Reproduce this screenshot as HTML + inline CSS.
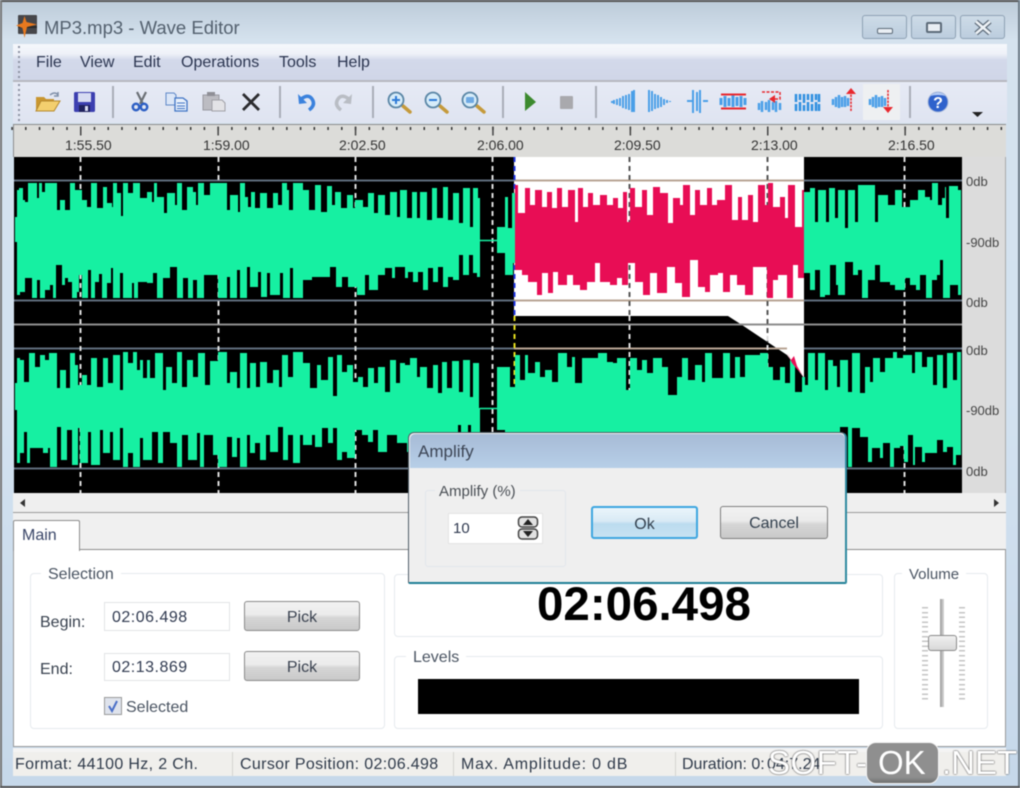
<!DOCTYPE html>
<html><head><meta charset="utf-8"><title>MP3.mp3 - Wave Editor</title>
<style>
html,body{margin:0;padding:0;width:1020px;height:788px;overflow:hidden;background:#c9d9e8}
#w{position:absolute;left:0;top:0;width:1020px;height:788px;overflow:hidden;filter:blur(.55px);font-family:"Liberation Sans",sans-serif;color:#2f3a4a;background:linear-gradient(#bccbd9,#d5e2ee 40px,#d3e2f0 400px,#c6d8ea)}
#w div,#w span.t{position:absolute;white-space:nowrap;box-sizing:border-box}
.t{font-size:16px;line-height:20px}
.btn{border:1.5px solid #8a8a8a;border-radius:3px;background:linear-gradient(#f2f2f2,#ebebeb 45%,#d6d6d6 55%,#c9c9c9);text-align:center;font-size:16px;color:#3a4250}
.grp{border:1.5px solid #e6eaee;border-radius:4px}
.lg{background:#fff;padding:0 7px;font-size:16px;line-height:18px;color:#4a5462}
.inp{background:#fff;border:1.5px solid #e2e4e6;font-size:16px;color:#303a50;letter-spacing:.5px}
.sep{width:2px;top:86px;height:32px;background:#a9adb8}
.wb{top:15px;height:24px;width:45px;border:1.5px solid #8ea1b4;border-radius:3px;background:linear-gradient(#cddbe7,#bccdde)}
.wm{font-size:33px;line-height:38px;color:#fff;text-shadow:0 0 1.5px #5a5a5a,0 0 1.5px #5a5a5a}
</style></head><body><div id="w">
<div style="left:0;top:0;width:1020px;height:2px;background:#555"></div>
<div style="left:0;top:0;width:1.5px;height:788px;background:#777"></div>
<div style="left:1018px;top:0;width:2px;height:788px;background:#6d7a86"></div>
<div style="left:0;top:786px;width:1020px;height:2px;background:#555"></div>

<!-- app icon -->
<svg style="position:absolute;left:15px;top:13px" width="24" height="26" viewBox="0 0 24 26"><rect x="3" y="2" width="19" height="19" rx="1" fill="#46464a"/><rect x="3" y="13" width="19" height="2" fill="#2a2a2a"/><path d="M9.500 3 L11.500 9 L22 11.500 L12 14 L9.500 25 L7.500 15 L1 12.500 L7.500 10Z" fill="#e8791f"/></svg>
<span class="t" style="left:44px;top:18px;font-size:18.500px;color:#53606e">MP3.mp3 - Wave Editor</span>

<!-- window buttons -->
<div class="wb" style="left:862px"></div><div class="wb" style="left:911px"></div><div class="wb" style="left:960px"></div>
<div style="left:877px;top:28px;width:16px;height:6px;background:#e9eef3;border:1.5px solid #5c6a78;border-radius:2px"></div>
<div style="left:926px;top:22px;width:16px;height:11px;background:#e9eef3;border:2.500px solid #5c6a78;border-radius:2px"></div>
<svg style="position:absolute;left:974px;top:20px" width="18" height="15"><path d="M2 1.500 L16 13.500 M16 1.500 L2 13.500" stroke="#5c6a78" stroke-width="5"/><path d="M2 1.500 L16 13.500 M16 1.500 L2 13.500" stroke="#eef2f6" stroke-width="2.500"/></svg>

<!-- menu -->
<div style="left:13px;top:44px;width:994px;height:36px;background:linear-gradient(#f6f8fc,#eef1f8 10px,#d3d9ea 16px,#d0d6e8)"></div>
<div style="left:13px;top:80px;width:994px;height:2px;background:#b6b8bf"></div>
<div style="left:13px;top:82px;width:994px;height:41px;background:linear-gradient(#e6eaf5,#dfe4f1)"></div>
<div style="left:18px;top:46px;width:2px;height:34px;background:repeating-linear-gradient(#8d93a3 0 2px,transparent 2px 5px)"></div>
<div style="left:18px;top:84px;width:2px;height:38px;background:repeating-linear-gradient(#8d93a3 0 2px,transparent 2px 5px)"></div>
<span class="t" style="left:36px;top:53px;color:#2b3550">File</span>
<span class="t" style="left:80px;top:53px;color:#2b3550">View</span>
<span class="t" style="left:133px;top:53px;color:#2b3550">Edit</span>
<span class="t" style="left:181px;top:53px;color:#2b3550">Operations</span>
<span class="t" style="left:279px;top:53px;color:#2b3550">Tools</span>
<span class="t" style="left:337px;top:53px;color:#2b3550">Help</span>

<!-- toolbar -->
<div class="sep" style="left:112px"></div><div class="sep" style="left:279px"></div><div class="sep" style="left:372px"></div><div class="sep" style="left:502px"></div><div class="sep" style="left:595px"></div><div class="sep" style="left:909px"></div>
<div style="left:863px;top:84px;width:37px;height:36px;background:#eef0f2"></div>
<svg style="position:absolute;left:0;top:82px" width="1020" height="42" viewBox="0 82 1020 42">
<path d="M36 111 V97 H44 L46 99 H54 V111Z" fill="#c9962f"/><path d="M36 111 L41 101 H60 L54 111Z" fill="#f3cf6e" stroke="#b5892e"/><path d="M50 95 Q55 91 58 95 M58 92 V96 H54" fill="none" stroke="#7f8fa8" stroke-width="1.500"/>
<rect x="74" y="92" width="21" height="20" rx="1.500" fill="#3c3fb0"/><rect x="78" y="93" width="13" height="9" fill="#d8dcf2"/><rect x="79" y="105" width="11" height="7" fill="#20225e"/><rect x="85" y="106" width="3" height="5" fill="#d8dcf2"/>
<path d="M137 92 L143 104 M146 92 L140 104" stroke="#6b7076" stroke-width="2.200"/><circle cx="136" cy="107" r="3.200" fill="none" stroke="#2d5fc4" stroke-width="2.500"/><circle cx="144" cy="107" r="3.200" fill="none" stroke="#2d5fc4" stroke-width="2.500"/>
<path d="M166 93 H174 L176 95 V105 H166Z" fill="#dbe6f7" stroke="#5f88c7"/><path d="M175 98 H183 L187 101 V111 H175Z" fill="#e8f0fb" stroke="#3f73c4" stroke-width="1.300"/><path d="M177 103 H185 M177 106 H185 M177 108.500 H185" stroke="#3f73c4"/>
<path d="M203 95 H219 V110 H203Z" fill="#bcbcc2" stroke="#9a9aa2"/><rect x="207" y="92" width="8" height="4" fill="#8f8f96"/><path d="M212 100 H222 L225 103 V111 H212Z" fill="#e3e3e6" stroke="#a0a0a6"/>
<path d="M243 94 L259 110 M259 94 L243 110" stroke="#2b2b2e" stroke-width="2.800"/>
<path d="M300 100 Q308 93 312 99 Q316 105 309 110" fill="none" stroke="#3b82dd" stroke-width="3.500"/><path d="M298 94 L299 104 L307 103Z" fill="#3b82dd"/>
<path d="M350 100 Q342 93 338 99 Q334 105 341 110" fill="none" stroke="#b9bdc4" stroke-width="3.500"/><path d="M352 94 L351 104 L343 103Z" fill="#b9bdc4"/>
<path d="M403 106 L410 112" stroke="#c59a3b" stroke-width="3.500" stroke-linecap="round"/><circle cx="396" cy="100" r="7.500" fill="#d6ecf9" stroke="#5a86a6" stroke-width="1.800"/><path d="M392 100 H400 M396 96 V104" stroke="#2d7ad6" stroke-width="2"/>
<path d="M440 106 L447 112" stroke="#c59a3b" stroke-width="3.500" stroke-linecap="round"/><circle cx="433" cy="100" r="7.500" fill="#d6ecf9" stroke="#5a86a6" stroke-width="1.800"/><path d="M429 100 H437" stroke="#2d7ad6" stroke-width="2"/>
<path d="M477 106 L484 112" stroke="#c59a3b" stroke-width="3.500" stroke-linecap="round"/><circle cx="470" cy="100" r="7.500" fill="#d6ecf9" stroke="#5a86a6" stroke-width="1.800"/><rect x="466" y="97" width="8" height="6" rx="1" fill="#6ea9e3"/>
<path d="M525 92 L536 102 L525 111Z" fill="#3c8a2e"/>
<rect x="560" y="96" width="13" height="13" rx="1" fill="#a9a9ad"/>
<g stroke="#4a9fe8" stroke-width="2" fill="none">
<path d="M612 101 v2 M614 100 v4 M617 99 v6 M620 98 v8 M623 96 v12 M626 95 v14 M629 94 v16 M632 91 v21 M634 90 v22"/>
<path d="M649 90 v22 M652 91 v20 M655 94 v15 M658 95 v13 M661 97 v10 M664 99 v6 M667 100 v3 M670 101 v1"/>
<path d="M687 101 h5 M703 101 h5 M693 90 v23 M697 92 v19 M700 90 v23"/>
<path d="M721 98 v7 M725 96 v11 M729 98 v8 M733 95 v12 M737 97 v9 M741 96 v11 M745 98 v7" stroke-width="3"/>
<path d="M759 103 v7 M762 101 v11 M766 102 v8 M769 100 v12 M773 102 v8 M776 101 v11 M780 103 v7" stroke-width="2.500"/>
<path d="M796 94 v8 M800 94 v6 M804 94 v9 M808 94 v6 M812 94 v8 M816 94 v6 M819 94 v8 M796 111 v-7 M800 111 v-9 M804 111 v-6 M808 111 v-9 M812 111 v-7 M816 111 v-9 M819 111 v-7" stroke="#2f8fe0" stroke-width="2.500"/>
<path d="M833 99 v6 M836 97 v10 M839 95 v13 M842 97 v10 M845 96 v11 M848 98 v8" stroke-width="2.500"/>
<path d="M870 99 v6 M873 97 v10 M876 95 v13 M879 97 v10 M882 96 v11 M885 98 v8" stroke-width="2.500"/>
</g>
<g stroke="#e8282e" fill="none">
<path d="M721 94.500 H746 M721 108.500 H746" stroke-width="2"/>
<path d="M762 92 H780 V99 H774" stroke-dasharray="3 1.500" stroke-width="1.500"/>
<path d="M851 111 V90" stroke-width="1.500" stroke-dasharray="2.500 1"/>
<path d="M888 90 V111" stroke-width="1.500" stroke-dasharray="2.500 1"/>
</g>
<path d="M769 99 L775 95 V103Z M846 94 L851 88 L856 94Z M883 107 H893 L888 113Z" fill="#e8282e"/>
<circle cx="938" cy="102" r="10" fill="#2f62cc" stroke="#a8b8d8"/><path d="M930 96 Q938 89 946 96 Q938 94 930 96Z" fill="#b7cdf5"/><text x="938" y="108" font-family="Liberation Sans" font-weight="bold" font-size="16" fill="#fff" text-anchor="middle">?</text>
<path d="M972 112 H983 L977.500 117Z" fill="#222"/>
</svg>

<!-- ruler -->
<div style="left:13px;top:124px;width:993px;height:33px;background:#dcdcd9;border-top:1.500px solid #8d8d8d;border-left:1.500px solid #8d8d8d"></div>
<span class="t" style="left:65px;top:135px;font-size:14px;color:#333">1:55.50</span>
<span class="t" style="left:203px;top:135px;font-size:14px;color:#333">1:59.00</span>
<span class="t" style="left:339px;top:135px;font-size:14px;color:#333">2:02.50</span>
<span class="t" style="left:477px;top:135px;font-size:14px;color:#333">2:06.00</span>
<span class="t" style="left:614px;top:135px;font-size:14px;color:#333">2:09.50</span>
<span class="t" style="left:751px;top:135px;font-size:14px;color:#333">2:13.00</span>
<span class="t" style="left:888px;top:135px;font-size:14px;color:#333">2:16.50</span>

<!-- right dB column -->
<div style="left:962px;top:157px;width:44px;height:336px;background:#dcdcdc;border-right:1.500px solid #a9a9a9"></div>
<span class="t" style="left:966px;top:172px;font-size:13px;color:#444">0db</span>
<span class="t" style="left:966px;top:233px;font-size:13px;color:#444">-90db</span>
<span class="t" style="left:966px;top:293px;font-size:13px;color:#444">0db</span>
<span class="t" style="left:966px;top:341px;font-size:13px;color:#444">0db</span>
<span class="t" style="left:966px;top:401px;font-size:13px;color:#444">-90db</span>
<span class="t" style="left:966px;top:462px;font-size:13px;color:#444">0db</span>

<!-- waveform -->
<svg style="position:absolute;left:0;top:0" width="1020" height="500" viewBox="0 0 1020 500">
<path d="M11.300 128.500 H1005" stroke="#333" stroke-width="3" stroke-dasharray="1.500 12.240"/>
<path d="M80 131 H1005" stroke="#444" stroke-width="9" stroke-dasharray="1.500 135.900"/>
<rect x="14" y="157" width="948" height="336" fill="#000"/>
<path d="M514 157 H804 V378 L787 355 L742 325 L728 316 H514Z" fill="#fff"/>
<g stroke-width="2">
<path d="M14 180.500 H514 M804 180.500 H962 M14 300.500 H514 M804 300.500 H962 M14 348.500 H514 M804 348.500 H962 M14 468.500 H962" stroke="#5f6d7c"/>
<path d="M514 180.500 H804 M514 300.500 H804 M514 348.500 H787" stroke="#b8a594"/>
<path d="M14 324.500 H962" stroke="#8e8e8e"/>
</g>
<g stroke-width="2" stroke-dasharray="5 4">
<path d="M80.500 157 V493 M218.500 157 V493 M355.500 157 V493 M492.500 157 V493 M904.500 157 V493" stroke="#ddd"/>
<path d="M629.500 157 V316 M767.500 157 V345" stroke="#555"/>
<path d="M629.500 316 V493 M767.500 336 V493" stroke="#ddd"/>
<path d="M514.500 157 V316" stroke="#2036e0"/>
<path d="M514.500 316 V433" stroke="#e6e01e"/>
</g>
<g fill="#16f0a2">
<!-- ch1 upper -->
<path d="M15 240V217H17V190H19V188H23V200H25V202H28V183H33V183H37V198H39V183H42V192H45V183H50V183H57V210H60V200H65V210H70V183H75V190H82V200H87V207H91V183H95V183H97V208H103V187H107V203H112V207H113V183H117V193H121V216H123V183H128V193H133V183H140V198H147V192H152V202H154V183H157V197H164V213H167V193H172V193H175V205H177V183H182V210H187V187H193V192H196V205H198V183H204V195H210V183H217V183H227V210H230V195H238V212H240V183H245V197H248V207H251V192H255V208H260V193H267V208H273V193H278V205H282V183H287V190H289V210H293V183H303V190H309V210H315V185H321V212H327V186H332V205H335V192H341V208H347V195H353V208H355V200H363V207H368V193H374V213H378V195H385V215H390V192H397V217H400V190H407V218H412V192H417V218H420V192H427V220H432V188H437V218H443V187H448V220H453V193H459V223H463V188H470V227H473V188H478V198H480V240Z"/>
<path d="M497 240V227H502V227H505V197H508V228H512V193H515V240Z"/>
<path d="M804 240V192H810V188H815V222H818V190H824V190H826V222H829V188H835V218H838V190H845V228H848V190H855V222H858V185H868V185H875V222H878V195H888V205H895V190H902V207H910V200H918V190H925V197H930V200H932V183H938V205H942V198H945V187H946V218H949V186H958V190H961V240Z"/>
<!-- ch1 lower -->
<path d="M15 240V242H17V295H20V292H25V278H28V278H32V298H35V298H37V280H40V298H45V290H50V285H53V298H56V265H58V265H62V285H65V278H68V282H72V298H77V292H79V275H82V298H88V270H91V298H95V282H99V274H102V298H107V283H111V268H113V298H120V273H123V298H132V283H134V298H138V282H147V283H153V273H157V298H163V278H170V267H177V298H183V278H188V298H193V280H197V298H204V275H218V298H227V277H230V298H237V270H240V298H247V267H250V287H258V272H261V297H267V273H270V295H277V295H280V273H283V298H290V268H293V298H303V280H312V277H322V277H330V267H336V287H342V277H348V287H357V295H365V275H369V290H378V275H385V268H392V278H395V267H405V278H408V272H413V282H418V272H423V290H428V268H433V282H438V267H443V287H448V277H453V280H459V255H463V275H469V255H473V273H477V277H480V240Z"/>
<path d="M497 240V253H505V275H513V263H515V240Z"/>
<path d="M804 240V273H810V290H815V270H820V297H825V295H830V265H836V285H838V295H845V262H853V275H858V270H862V298H868V280H875V265H880V282H890V285H895V290H905V278H910V285H916V290H920V275H926V298H932V280H937V275H940V260H943V298H950V285H958V295H961V240Z"/>
<!-- ch2 upper -->
<path d="M15 408V383H17V358H20V360H24V382H29V353H35V367H40V355H45V360H49V353H57V388H60V370H66V388H70V353H75V365H78V385H82V375H87V385H91V358H97V387H103V358H108V383H113V355H120V390H123V352H128V363H133V352H137V370H140V360H143V378H147V360H150V378H155V353H163V390H166V367H172V383H177V352H182V387H187V360H193V377H198V353H205V385H210V361H218V352H227V383H230V372H237V388H240V353H247V388H250V363H256V387H260V362H267V383H273V370H279V387H282V355H288V377H293V352H303V363H310V388H317V365H321V380H328V357H333V396H337V355H342V372H347V365H353V382H358V377H363V387H368V368H374V383H378V367H385V392H390V360H396V383H400V363H405V365H410V358H417V377H420V367H427V388H433V365H438V393H442V362H447V388H452V361H459V392H463V360H470V397H473V363H479V408Z"/>
<path d="M497 408V367H505V367H510V387H515V355H520V380H525V355H528V373H535V362H540V377H545V370H552V382H558V353H567V367H572V357H575V383H582V358H588V358H598V353H607V362H613V363H617V358H626V390H630V358H637V370H642V360H647V373H653V358H662V367H668V395H677V377H682V358H688V380H695V365H702V382H705V353H712V378H723V353H730V378H735V357H740V377H745V355H755V355H760V353H768V367H773V380H780V367H785V383H790V360H795V392H802V377H805V385H808V353H815V380H818V353H825V390H828V360H833V366H837V387H840V360H848V392H852V353H860V393H865V367H870V382H873V358H880V372H885V358H893V352H897V358H903V355H912V373H915V352H922V367H927V357H933V385H937V355H943V388H947V353H953V380H957V352H961V408Z"/>
<!-- ch2 lower -->
<path d="M15 408V410H17V463H20V453H24V432H27V463H30V448H43V453H48V448H50V467H57V427H61V460H67V430H72V465H78V428H80V463H88V432H91V465H100V430H103V453H110V432H113V460H120V428H123V467H128V453H133V467H140V438H143V460H152V432H158V463H163V432H170V443H177V467H182V435H188V460H197V433H200V467H204V435H213V455H218V467H227V437H232V457H237V438H240V467H247V435H250V453H255V443H260V460H266V435H270V452H278V427H283V460H288V435H293V463H300V435H303V445H312V435H315V447H322V428H328V443H333V428H337V460H342V452H347V458H355V430H362V435H368V442H373V430H378V452H387V435H397V443H407V452H420V445H458V425H461V440H468V425H471V440H480V408Z"/>
<path d="M497 408V430H505V440H840V427H848V467H852V428H860V437H868V462H872V448H880V458H883V443H890V467H894V448H900V446H904V462H908V435H913V465H915V447H922V462H925V453H937V440H943V452H947V447H953V465H956V455H961V408Z"/>
</g>
<path d="M480 240.500 H497 M480 408.500 H497" stroke="#16f0a2" stroke-width="1.500"/>
<!-- pink -->
<g fill="#e80d55">
<path d="M515 240V185H518V213H525V188H530V205H535V190H542V207H547V192H552V208H557V188H562V207H568V190H575V222H578V188H583V207H588V193H593V205H600V195H607V205H613V198H618V208H623V192H627V222H630V188H635V207H642V190H647V215H653V187H660V193H668V223H673V198H680V205H683V185H690V215H695V190H700V205H707V188H712V205H717V200H725V185H732V220H738V197H742V220H748V195H753V222H758V185H765V205H768V183H773V207H780V197H785V218H788V185H795V227H802V190H804V240Z"/>
<path d="M515 240V270H522V275H528V282H537V295H542V273H548V293H553V272H558V285H567V275H573V285H580V290H587V282H595V263H600V282H610V285H617V278H622V285H628V263H635V282H643V295H650V273H657V293H667V267H675V283H682V297H690V260H698V287H705V292H710V275H718V273H723V292H730V275H737V285H745V295H753V267H767V298H773V280H778V275H787V298H793V265H798V278H804V240Z"/>
<polygon points="787,353 791,360 794,356 797,366 804,378 800,372 796,368 792,363"/>
</g>
</svg>

<!-- scrollbar -->
<div style="left:13px;top:493px;width:993px;height:20px;background:#efefef;border-bottom:1.500px solid #9a9a9a"></div>
<svg style="position:absolute;left:18px;top:498px" width="10" height="10"><path d="M7 1 L2 5 L7 9Z" fill="#333"/></svg>
<svg style="position:absolute;left:991px;top:498px" width="10" height="10"><path d="M3 1 L8 5 L3 9Z" fill="#333"/></svg>

<!-- tab panel -->
<div style="left:13px;top:513px;width:993px;height:37px;background:#f0f0f0"></div>
<div style="left:13px;top:549px;width:993px;height:198px;background:#fff;border:1.500px solid #9a9a9a;border-top:1.500px solid #8d8d8d"></div>
<div style="left:13px;top:520px;width:67px;height:31px;background:#fff;border:1.500px solid #8d8d8d;border-bottom:0;border-radius:2px 2px 0 0"></div>
<span class="t" style="left:22px;top:526px;color:#3a4668">Main</span>

<!-- selection -->
<div class="grp" style="left:30px;top:573px;width:355px;height:156px"></div>
<span class="t lg" style="left:41px;top:566px">Selection</span>
<span class="t" style="left:40px;top:613px;color:#39424f">Begin:</span>
<div class="inp" style="left:104px;top:602px;width:126px;height:29px;line-height:29px;padding-left:7px">02:06.498</div>
<div class="btn" style="left:244px;top:601px;width:116px;height:30px;line-height:31px">Pick</div>
<span class="t" style="left:40px;top:660px;color:#39424f">End:</span>
<div class="inp" style="left:104px;top:653px;width:126px;height:28px;line-height:28px;padding-left:7px">02:13.869</div>
<div class="btn" style="left:244px;top:651px;width:116px;height:30px;line-height:31px">Pick</div>
<div style="left:104px;top:697px;width:18px;height:18px;background:#dfe3ec;border:1.500px solid #9a9a9a"></div>
<svg style="position:absolute;left:104px;top:697px" width="18" height="18"><path d="M5 9 L8 14 L13 4" fill="none" stroke="#4a6fc8" stroke-width="2"/></svg>
<span class="t" style="left:126px;top:698px;color:#4a5462">Selected</span>

<!-- time -->
<div class="grp" style="left:394px;top:574px;width:489px;height:63px"></div>
<span class="t" style="left:537px;top:578px;font-size:47.500px;line-height:54px;font-weight:bold;color:#000">02:06.498</span>

<!-- levels -->
<div class="grp" style="left:394px;top:656px;width:489px;height:73px"></div>
<span class="t lg" style="left:406px;top:649px">Levels</span>
<div style="left:418px;top:679px;width:441px;height:35px;background:#000"></div>

<!-- volume -->
<div class="grp" style="left:894px;top:573px;width:94px;height:156px"></div>
<span class="t lg" style="left:902px;top:566px;font-size:15px">Volume</span>
<div style="left:922px;top:607px;width:6px;height:96px;background:repeating-linear-gradient(#c4c4c4 0 1.500px,transparent 1.500px 4.800px)"></div>
<div style="left:959px;top:607px;width:6px;height:96px;background:repeating-linear-gradient(#c4c4c4 0 1.500px,transparent 1.500px 4.800px)"></div>
<div style="left:940px;top:599px;width:4px;height:108px;background:linear-gradient(90deg,#9a9a9a,#d8d8d8)"></div>
<div style="left:928px;top:635px;width:29px;height:16px;border:1.500px solid #8a8a8a;border-radius:3px;background:linear-gradient(#f0f0f0,#d8d8d8)"></div>

<!-- status bar -->
<div style="left:13px;top:752px;width:993px;height:24px;background:#f0efec"></div>
<div style="left:13px;top:748px;width:993px;height:4px;background:#f4f4f4"></div>
<div style="left:232px;top:752px;width:1px;height:24px;background:#d4d4d0"></div>
<div style="left:453px;top:752px;width:1px;height:24px;background:#d4d4d0"></div>
<div style="left:675px;top:752px;width:1px;height:24px;background:#d4d4d0"></div>
<span class="t" style="left:15px;top:755px;color:#2f3a4a;letter-spacing:.35px">Format: 44100 Hz, 2 Ch.</span>
<span class="t" style="left:240px;top:755px;color:#2f3a4a;letter-spacing:.35px">Cursor Position: 02:06.498</span>
<span class="t" style="left:461px;top:755px;color:#2f3a4a;letter-spacing:.8px">Max. Amplitude: 0 dB</span>
<span class="t" style="left:682px;top:755px;color:#2f3a4a">Duration: 0:</span>
<span class="t" style="left:767px;top:755px;color:#2f3a4a">04:7.24</span>

<!-- dialog -->
<div style="left:408px;top:432px;width:439px;height:152px;border:1.500px solid #4f5d68;border-bottom:2px solid #1f7f96;border-right:2px solid #2f8aa0;border-radius:6px 6px 2px 2px;background:#efefef"></div>
<div style="left:410px;top:434px;width:435px;height:34px;border-radius:5px 5px 0 0;background:linear-gradient(#a7bbd6,#b7cfe8)"></div>
<span class="t" style="left:418px;top:442px;font-size:17px;color:#3d4656">Amplify</span>
<div style="left:425px;top:490px;width:141px;height:77px;border:1.500px solid #e2e6ec;border-radius:3px"></div>
<span class="t" style="left:435px;top:482px;font-size:15px;background:#efefef;padding:0 4px;color:#4a4f55">Amplify (%)</span>
<div style="left:448px;top:513px;width:95px;height:31px;background:#fff;border:1.500px solid #e4e4e4;font-size:15px;line-height:29px;padding-left:4px;color:#303a50">10</div>
<svg style="position:absolute;left:517px;top:516px" width="23" height="25"><rect x="1.500" y="1" width="19" height="10" rx="3.500" fill="#e2e2e2" stroke="#444" stroke-width="1.500"/><rect x="1.500" y="13" width="19" height="10" rx="3.500" fill="#e2e2e2" stroke="#444" stroke-width="1.500"/><path d="M11 3 L16 9 H6Z M11 21 L16 15 H6Z" fill="#222"/></svg>
<div class="btn" style="left:591px;top:506px;width:107px;height:33px;line-height:33px;border:2px solid #3da6e0;background:linear-gradient(#eaf5fb,#d9eaf5 45%,#bcdcef 55%,#c7e2f2);color:#33404e">Ok</div>
<div class="btn" style="left:720px;top:506px;width:108px;height:33px;line-height:33px;border:1.500px solid #7e7e7e;color:#33404e">Cancel</div>

<!-- watermark -->
<span class="t wm" style="left:768px;top:744px;letter-spacing:.5px">SOFT-</span>
<div style="left:866px;top:742px;width:73px;height:42px;border-radius:10px;background:linear-gradient(#8f8f8f,#8f8f8f 85%,#6f7070);border:1.500px solid #f4f4f4"></div>
<span class="t" style="left:878px;top:744px;font-size:33px;line-height:38px;color:#fff">OK</span>
<span class="t wm" style="left:942px;top:744px">.NET</span>
</div></body></html>
